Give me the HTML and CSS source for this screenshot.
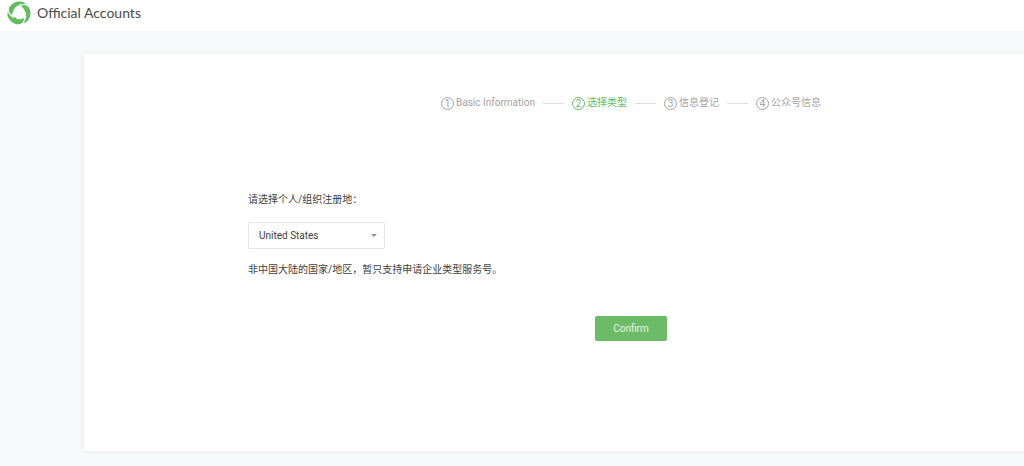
FILE: index.html
```html
<!DOCTYPE html>
<html lang="zh">
<head>
<meta charset="utf-8">
<meta name="viewport" content="width=device-width, initial-scale=1">
<title>Official Accounts</title>
<link rel="stylesheet" href="styles.css">
</head>
<body>
<header class="header">
  <a class="brand" href="#">
    <svg class="brand-mark" viewBox="0 0 24 24" aria-hidden="true">
      <g fill="#62bd5e">
        <path d="M2.4 6C5.4 .9 12 -.8 16.8 1.3L18.6 3C14.4 2.5 10.4 3.9 8.1 6.8C6.3 9 5.2 11.6 5.3 14.2C2.2 12.2 1 9.2 2.4 6Z"/>
        <path d="M2.4 6C5.4 .9 12 -.8 16.8 1.3L18.6 3C14.4 2.5 10.4 3.9 8.1 6.8C6.3 9 5.2 11.6 5.3 14.2C2.2 12.2 1 9.2 2.4 6Z" transform="rotate(120 12 12)"/>
        <path d="M2.4 6C5.4 .9 12 -.8 16.8 1.3L18.6 3C14.4 2.5 10.4 3.9 8.1 6.8C6.3 9 5.2 11.6 5.3 14.2C2.2 12.2 1 9.2 2.4 6Z" transform="rotate(240 12 12)"/>
        <path d="M7.2 15.6L6.4 19.4L10.6 18.4Z"/>
      </g>
    </svg>
    <span>Official Accounts</span>
  </a>
</header>
<main class="page">
  <form class="card">
    <ol class="steps">
      <li class="step"><span class="step-num">1</span>Basic Information</li>
      <li class="step step-current" aria-current="step"><span class="step-num">2</span>选择类型</li>
      <li class="step"><span class="step-num">3</span>信息登记</li>
      <li class="step"><span class="step-num">4</span>公众号信息</li>
    </ol>
    <div class="field">
      <label for="region">请选择个人/组织注册地：</label>
      <div class="select-box">
        <select id="region" class="select"><option>United States</option></select>
      </div>
      <p class="note">非中国大陆的国家/地区，暂只支持申请企业类型服务号。</p>
    </div>
    <button class="confirm" type="button">Confirm</button>
  </form>
</main>
</body>
</html>
```
FILE: styles.css
```css
* {
  box-sizing: border-box;
}

body {
  margin: 0;
  min-height: 100vh;
  overflow: hidden;
  background: #f6f8f9;
  color: #404040;
  font: 10px/16px Roboto, "Noto Sans CJK SC", sans-serif;
}

.header {
  display: flex;
  padding: 1px 7px 6px;
  background: #fff;
}

.brand {
  display: flex;
  align-items: center;
  gap: 6px;
  color: #4a4a4a;
  font: 14px/24px Lato, sans-serif;
  text-decoration: none;
}

.brand-mark {
  width: 24px;
  height: 24px;
}

/* The form keeps its desktop width on narrow windows. */
.page {
  min-width: 1262px;
  padding: 23px 84px 15px;
}

.card {
  display: flex;
  flex-direction: column;
  padding: 41px 164px 110px;
  border-radius: 2px;
  background: #fff;
  box-shadow: 0 0 4px #e6eaec;
}

.steps {
  display: flex;
  justify-content: center;
  margin: 0;
  padding: 0;
  list-style: none;
  color: #a3a3a3;
}

.step {
  display: flex;
  align-items: center;
}

.step + .step::before {
  content: "";
  width: 21px;
  height: 1px;
  margin: 0 8px;
  background: #d9dfe4;
}

.step-num {
  width: 13px;
  height: 13px;
  margin-right: 2px;
  border: 1px solid;
  border-radius: 50%;
  line-height: 11px;
  text-align: center;
}

.step-current {
  color: #62bd5e;
}

.field {
  display: flex;
  flex-direction: column;
  align-items: flex-start;
  margin-top: 81px;
}

.select-box {
  position: relative;
  width: 137px;
  margin: 14px 0 13px;
}

.select-box::after {
  content: "";
  position: absolute;
  top: 12px;
  right: 8px;
  border: 3px solid transparent;
  border-top-color: #8f8f8f;
  border-bottom: 0;
  pointer-events: none;
}

.select {
  width: 100%;
  height: 27px;
  padding: 0 10px;
  border: 1px solid #e7e7eb;
  border-radius: 2px;
  background: #fff;
  color: #404040;
  font: inherit;
  appearance: none;
}

.note {
  margin: 0;
}

.confirm {
  align-self: center;
  margin-top: 38px;
  padding: 4px 18px;
  border: 0;
  border-radius: 2px;
  background: #6cbb66;
  color: #e9f6e8;
  font: inherit;
  line-height: 17px;
}
```
